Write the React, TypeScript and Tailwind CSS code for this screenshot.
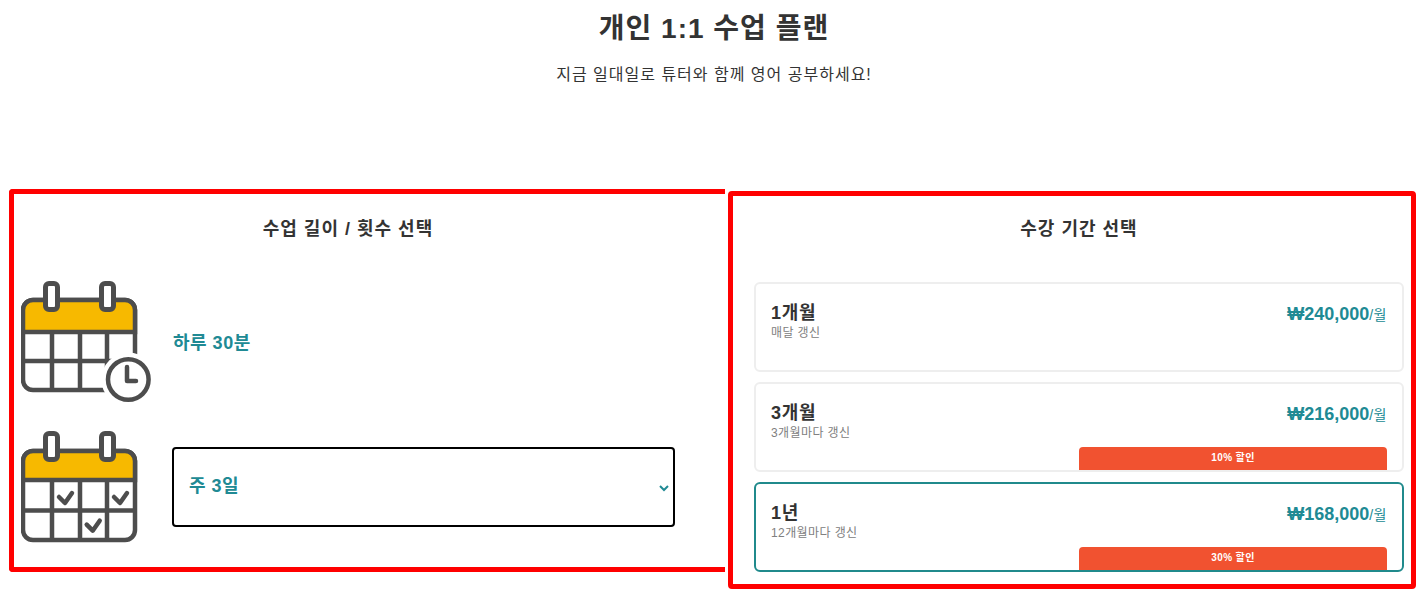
import React from "react";

const font = { fontFamily: '"Liberation Sans", "Noto Sans CJK KR", sans-serif' };
const gray = "#4d4d4d";

function CalendarBase({ top, header, row, children }: { top: number; header: number; row: number; children: React.ReactNode }) {
  return (
    <>
      <rect x="2" y={top} width="112" height={109 - top} rx="10" fill="#fff" stroke={gray} strokeWidth="4.5" />
      <path
        d={`M2 ${header}V${top + 10}a10 10 0 0 1 10-10h92a10 10 0 0 1 10 10V${header}z`}
        fill="#f7b900"
        stroke={gray}
        strokeWidth="4.5"
      />
      <path d={`M2 ${row}H114M31 ${header}V109M59 ${header}V109M86 ${header}V109`} fill="none" stroke={gray} strokeWidth="4.5" />
      <rect x="24.5" y="2.5" width="12" height="26" rx="3.5" fill="#fff" stroke={gray} strokeWidth="5" />
      <rect x="80.5" y="2.5" width="12" height="26" rx="3.5" fill="#fff" stroke={gray} strokeWidth="5" />
      {children}
    </>
  );
}

function ClockCalendar() {
  return (
    <svg width="132" height="122" viewBox="0 0 132 122" className="block shrink-0">
      <CalendarBase top={19} header={51} row={80}>
        <circle cx="107.3" cy="98.5" r="27" fill="#fff" />
        <circle cx="107.3" cy="98.5" r="20.3" fill="#fff" stroke={gray} strokeWidth="4.5" />
        <path d="M106 86V100H115" fill="none" stroke={gray} strokeWidth="4.5" strokeLinecap="round" strokeLinejoin="round" />
      </CalendarBase>
    </svg>
  );
}

function Check({ x, y }: { x: number; y: number }) {
  return (
    <path
      d={`M${x} ${y}l6 6 7 -10`}
      fill="none"
      stroke={gray}
      strokeWidth="4.5"
      strokeLinecap="round"
      strokeLinejoin="round"
    />
  );
}

function CheckCalendar() {
  return (
    <svg width="132" height="112" viewBox="0 0 132 112" className="block shrink-0">
      <CalendarBase top={20} header={49} row={79.5}>
        <Check x={38} y={66} />
        <Check x={93} y={66} />
        <Check x={65.7} y={93.7} />
      </CalendarBase>
    </svg>
  );
}

function PlanCard({
  title,
  sub,
  price,
  badge,
  active,
}: {
  title: string;
  sub: string;
  price: string;
  badge?: string;
  active?: boolean;
}) {
  return (
    <div
      className={`relative flex h-[90px] justify-between rounded-md border-2 pl-[15px] pr-[15px] pt-[18px] ${
        active ? "border-[#208a8c]" : "border-[#eeeeee]"
      }`}
    >
      <div>
        <div className="text-[18px] leading-[22px] font-bold tracking-[0.7px] text-[#333333]">{title}</div>
        <div className="mt-[2px] text-[12px] leading-[15px] tracking-[0.4px] text-[#808080]">{sub}</div>
      </div>
      <div className="-mt-[1px] leading-[26px] text-[#208a94]">
        <span className="-ml-[1px] text-[18px] font-bold">{price}</span>
        <span className="text-[14px] tracking-[0.5px]">/월</span>
      </div>
      {badge && (
        <div className="absolute bottom-0 right-[15px] flex h-[23px] w-[308px] items-center justify-center rounded-t bg-[#f15230] pb-[2px] text-[10px] font-bold tracking-[0.4px] text-white">
          {badge}
        </div>
      )}
    </div>
  );
}

export default function App() {
  return (
    <div className="h-[597px] overflow-hidden bg-white text-[#333333]" style={font}>
      <div className="flex flex-col items-center pl-[5px]">
        <h1 className="h-[54px] text-[28px] leading-[58px] font-bold tracking-[1px]">개인 1:1 수업 플랜</h1>
        <p className="mt-[7px] text-[16px] leading-[28px] tracking-[1px]">지금 일대일로 튜터와 함께 영어 공부하세요!</p>
      </div>

      <div className="mt-[100px] flex items-start pl-[9px]">
        <section className="h-[383px] w-[716px] rounded-tl rounded-bl border-[5px] border-r-0 border-[#ff0000] pl-[7px] pr-[50px]">
          <h2 className="mt-[22px] text-center text-[18px] leading-[26px] font-bold tracking-[1px]">수업 길이 / 횟수 선택</h2>
          <div className="mt-[39px] flex items-start gap-[20px]">
            <ClockCalendar />
            <div className="mt-[47px] text-[18px] leading-[30px] font-bold tracking-[0.5px] text-[#208a94]">하루 30분</div>
          </div>
          <div className="mt-[28px] flex items-start gap-[19px]">
            <CheckCalendar />
            <div className="mt-[16px] flex h-[80px] w-[503px] shrink-0 items-center justify-between rounded border-2 border-black pb-[2px] pl-[15px] pr-[4px]">
              <span className="text-[18px] font-bold tracking-[0.5px] text-[#208a94]">주 3일</span>
              <svg width="10" height="7" viewBox="0 0 10 7" className="mt-[5px]">
                <path d="M1 1l4 4 4-4" fill="none" stroke="#208a94" strokeWidth="2" />
              </svg>
            </div>
          </div>
        </section>

        <section className="ml-[3px] mt-[2px] h-[398px] w-[688px] rounded border-[5px] border-[#ff0000] pl-[21px] pr-[7px]">
          <h2 className="mt-[20px] text-center text-[18px] leading-[26px] font-bold tracking-[1px]">수강 기간 선택</h2>
          <div className="mt-[40px] flex flex-col gap-[10px]">
            <PlanCard title="1개월" sub="매달 갱신" price="₩240,000" />
            <PlanCard title="3개월" sub="3개월마다 갱신" price="₩216,000" badge="10% 할인" />
            <PlanCard title="1년" sub="12개월마다 갱신" price="₩168,000" badge="30% 할인" active />
          </div>
        </section>
      </div>
    </div>
  );
}
